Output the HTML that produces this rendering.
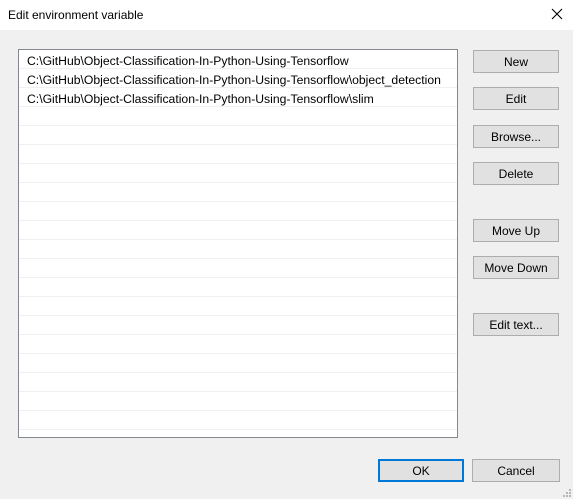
<!DOCTYPE html>
<html><head><style>
body{margin:0;width:573px;height:499px;background:#f0f0f0;font-family:"Liberation Sans",Arial,sans-serif;font-size:12px;color:#000;position:relative;overflow:hidden}
.title{position:absolute;left:0;top:0;width:573px;height:30px;background:#fff}
.title span{position:absolute;left:8px;top:8px;font-size:12px}
.x{position:absolute;left:550px;top:7px}
.list{position:absolute;left:18px;top:49px;width:438px;height:387px;border:1px solid #828790;background:#fff;overflow:hidden}
.row{height:16px;padding-top:2px;border-bottom:1px solid #f0f0f0;line-height:19px;padding-left:8px;white-space:nowrap;font-size:12.2px}
.btn{position:absolute;left:473px;width:84px;height:21px;border:1px solid #adadad;background:#e1e1e1;text-align:center;line-height:22px}
.grip{position:absolute;width:2px;height:2px;background:#b8b8b8}
</style></head><body>
<div class="title"><span>Edit environment variable</span>
<svg class="x" width="14" height="14"><path d="M2 2L12 12M12 2L2 12" stroke="#000" stroke-width="1.1"/></svg></div>
<div class="list">
<div class="row">C:\GitHub\Object-Classification-In-Python-Using-Tensorflow</div>
<div class="row">C:\GitHub\Object-Classification-In-Python-Using-Tensorflow\object_detection</div>
<div class="row">C:\GitHub\Object-Classification-In-Python-Using-Tensorflow\slim</div>
<div class="row"></div><div class="row"></div><div class="row"></div><div class="row"></div><div class="row"></div><div class="row"></div><div class="row"></div><div class="row"></div><div class="row"></div><div class="row"></div><div class="row"></div><div class="row"></div><div class="row"></div><div class="row"></div><div class="row"></div><div class="row"></div><div class="row"></div><div class="row"></div>
</div>
<div class="btn" style="top:50px">New</div>
<div class="btn" style="top:87px">Edit</div>
<div class="btn" style="top:125px">Browse...</div>
<div class="btn" style="top:162px">Delete</div>
<div class="btn" style="top:219px">Move Up</div>
<div class="btn" style="top:256px">Move Down</div>
<div class="btn" style="top:313px">Edit text...</div>
<div class="btn" style="left:378px;top:459px;width:82px;height:19px;line-height:20px;border:2px solid #0078d7">OK</div>
<div class="btn" style="left:472px;top:459px;width:86px">Cancel</div>
<div class="grip" style="left:569px;top:489px"></div>
<div class="grip" style="left:566px;top:492px"></div><div class="grip" style="left:569px;top:492px"></div>
<div class="grip" style="left:563px;top:495px"></div><div class="grip" style="left:566px;top:495px"></div><div class="grip" style="left:569px;top:495px"></div>
</body></html>
